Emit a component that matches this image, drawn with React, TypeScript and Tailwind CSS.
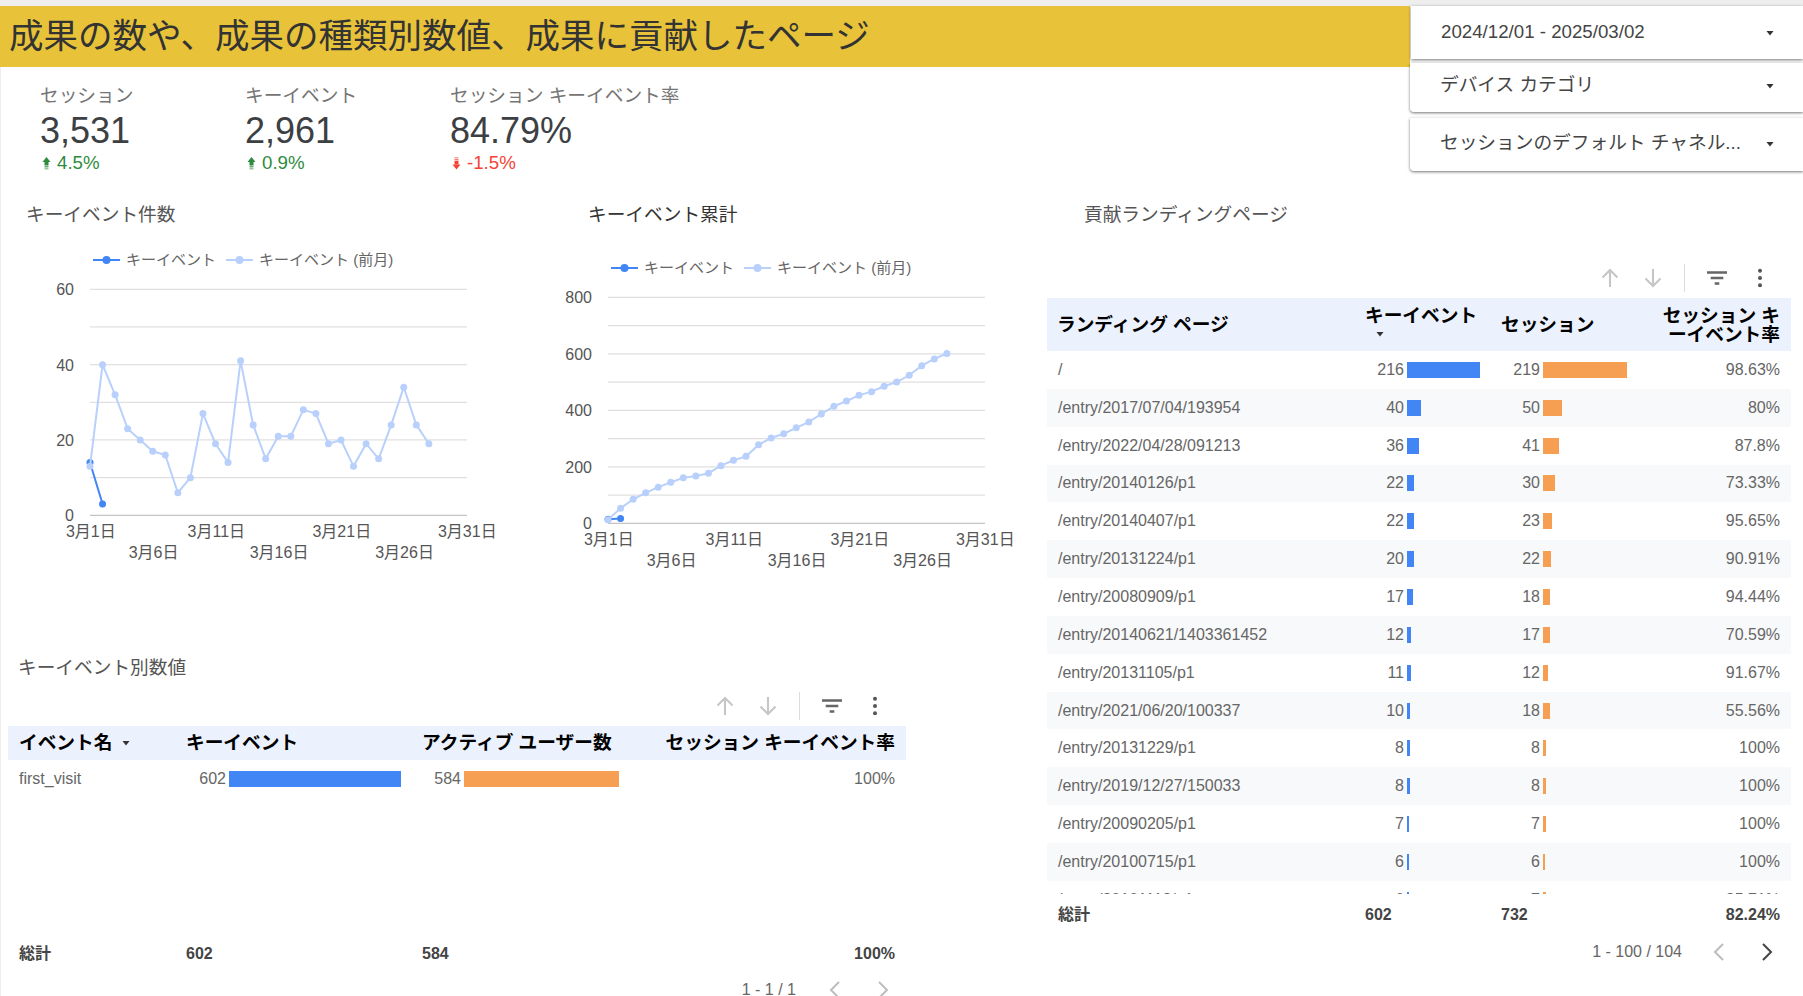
const prev = [13, 40, 32, 23, 20, 17, 16, 6, 10, 27, 19, 14, 41, 24, 15, 21, 21, 28, 27, 19, 20, 13, 19, 15, 24, 34, 24, 19];
const cumPrev = prev.reduce<number[]>((acc, v) => [...acc, (acc[acc.length - 1] ?? 0) + v], []);

const landing = [
  { page: "/", key: 216, sess: 219, rate: "98.63%" },
  { page: "/entry/2017/07/04/193954", key: 40, sess: 50, rate: "80%" },
  { page: "/entry/2022/04/28/091213", key: 36, sess: 41, rate: "87.8%" },
  { page: "/entry/20140126/p1", key: 22, sess: 30, rate: "73.33%" },
  { page: "/entry/20140407/p1", key: 22, sess: 23, rate: "95.65%" },
  { page: "/entry/20131224/p1", key: 20, sess: 22, rate: "90.91%" },
  { page: "/entry/20080909/p1", key: 17, sess: 18, rate: "94.44%" },
  { page: "/entry/20140621/1403361452", key: 12, sess: 17, rate: "70.59%" },
  { page: "/entry/20131105/p1", key: 11, sess: 12, rate: "91.67%" },
  { page: "/entry/2021/06/20/100337", key: 10, sess: 18, rate: "55.56%" },
  { page: "/entry/20131229/p1", key: 8, sess: 8, rate: "100%" },
  { page: "/entry/2019/12/27/150033", key: 8, sess: 8, rate: "100%" },
  { page: "/entry/20090205/p1", key: 7, sess: 7, rate: "100%" },
  { page: "/entry/20100715/p1", key: 6, sess: 6, rate: "100%" },
  { page: "/entry/20101118/p1", key: 6, sess: 7, rate: "85.71%" },
];

function Metric({ label, value, delta, up }: { label: string; value: string; delta: string; up: boolean }) {
  return (
    <div className="w-[205px]">
      <div className="whitespace-nowrap pt-px text-[18.7px] leading-[22px] text-[#757575]">{label}</div>
      <div className="mt-[3px] text-[36px] leading-[42px] text-[#3c4043]">{value}</div>
      <div className={`flex items-center gap-[6px] text-[18.7px] leading-[22px] ${up ? "text-[#2e8b3d]" : "text-[#f44336]"}`}>
        <svg width="9" height="14" viewBox="0 0 9 14" className="ml-[2px] fill-current">
          {up ? (
            <>
              <path d="M4.5 1 8.5 6h-8z" />
              <rect x="2.5" y="6" width="4" height="3.5" />
              <rect x="2.5" y="10" width="4" height="1.5" opacity="0.7" />
              <rect x="2.5" y="12" width="4" height="1.5" opacity="0.5" />
            </>
          ) : (
            <>
              <path d="M4.5 13.5 8.5 8.5h-8z" />
              <rect x="2.5" y="5" width="4" height="3.5" />
              <rect x="2.5" y="3" width="4" height="1.5" opacity="0.7" />
              <rect x="2.5" y="1" width="4" height="1.5" opacity="0.5" />
            </>
          )}
        </svg>
        {delta}
      </div>
    </div>
  );
}

function Caret() {
  return (
    <svg width="8" height="6" viewBox="0 0 8 6" className="fill-[#333]">
      <path d="M0.5 1h7L4 5.5z" />
    </svg>
  );
}

function FilterBox({ label, className }: { label: string; className: string }) {
  return (
    <div className={`flex items-center justify-between bg-white pl-[30px] pr-[29px] text-[18.7px] text-[#444] shadow-[0_1px_3px_rgba(0,0,0,0.55)] ${className}`}>
      <span>{label}</span>
      <Caret />
    </div>
  );
}

function LegendItem({ color, label }: { color: string; label: string }) {
  return (
    <div className="flex items-center gap-[6px]">
      <svg width="27" height="10" viewBox="0 0 27 10">
        <path d="M0 5h27" stroke={color} strokeWidth="2" />
        <circle cx="13.5" cy="5" r="4" fill={color} />
      </svg>
      <span>{label}</span>
    </div>
  );
}

function LineChart({ ticks, max, previous, current, topClass, titleClass, title }: {
  ticks: (number | null)[];
  max: number;
  previous: number[];
  current: number[];
  topClass: string;
  titleClass: string;
  title: string;
}) {
  const x = (i: number) => 90 + i * 12.55;
  const y = (v: number) => 244.3 - (v / max) * 226;
  const points = (vals: number[]) => vals.map((v, i) => `${x(i)},${y(v)}`).join(" ");
  const dates = [1, 6, 11, 16, 21, 26, 31];

  return (
    <div className="w-[518px]">
      <h2 className={`h-[30px] text-[18.7px] leading-[30px] ${titleClass}`}>{title}</h2>
      <div className={`mb-px flex h-[20px] items-center gap-[10px] pl-[93px] text-[15px] text-[#666] ${topClass}`}>
        <LegendItem color="#4285f4" label="キーイベント" />
        <LegendItem color="#b8d0fb" label="キーイベント (前月)" />
      </div>
      <svg width="518" height="300" viewBox="0 0 518 300">
        {ticks.map((t, i) => {
          const gy = 18.3 + (i * 226) / (ticks.length - 1);
          const base = i === ticks.length - 1;
          return (
            <g key={i}>
              <path d={`M90 ${gy}H467`} stroke={base ? "#c4c4c4" : "#e0e0e0"} strokeWidth="1.2" />
              {t !== null && (
                <text x="74" y={gy + 6} textAnchor="end" fontSize="16" fill="#555">{t}</text>
              )}
            </g>
          );
        })}
        {dates.map((d, i) => (
          <text key={d} x={x(d - 1) + 0.8} y={i % 2 === 0 ? 266 : 287} textAnchor="middle" fontSize="16" fill="#555">
            3月{d}日
          </text>
        ))}
        <polyline points={points(current)} fill="none" stroke="#4285f4" strokeWidth="2" />
        {current.map((v, i) => <circle key={i} cx={x(i)} cy={y(v)} r="3.5" fill="#4285f4" />)}
        <polyline points={points(previous)} fill="none" stroke="#b8d0fb" strokeWidth="2" />
        {previous.map((v, i) => <circle key={i} cx={x(i)} cy={y(v)} r="3.5" fill="#b8d0fb" />)}
      </svg>
    </div>
  );
}

function Toolbar({ className }: { className: string }) {
  return (
    <div className={`flex h-[30px] items-center justify-end ${className}`}>
      <svg width="24" height="24" viewBox="0 0 24 24" fill="none" stroke="#c6c6c6" strokeWidth="2.1">
        <path d="M12 21V4M4.5 11.5 12 4l7.5 7.5" />
      </svg>
      <svg width="24" height="24" viewBox="0 0 24 24" fill="none" stroke="#c6c6c6" strokeWidth="2.1" className="ml-[19px]">
        <path d="M12 3v17M4.5 12.5 12 20l7.5-7.5" />
      </svg>
      <div className="ml-[19px] h-[28px] w-px bg-[#dcdcdc]" />
      <svg width="24" height="24" viewBox="0 0 24 24" fill="none" stroke="#666" strokeWidth="2.4" className="ml-[20px]">
        <path d="M2 6.5h20M5.7 12h12.6M9.7 17.5h4.6" />
      </svg>
      <svg width="24" height="24" viewBox="0 0 24 24" fill="#555" className="ml-[19px]">
        <circle cx="12" cy="4.7" r="2" />
        <circle cx="12" cy="12" r="2" />
        <circle cx="12" cy="19.3" r="2" />
      </svg>
    </div>
  );
}

function Chevron({ dir, active }: { dir: "left" | "right"; active: boolean }) {
  return (
    <svg width="14" height="20" viewBox="0 0 14 20" fill="none" stroke={active ? "#444" : "#bdbdbd"} strokeWidth="2">
      <path d={dir === "left" ? "M11 2 3 10l8 8" : "M3 2l8 8-8 8"} />
    </svg>
  );
}

function Bar({ value, width, color, numClass }: { value: number; width: number; color: string; numClass: string }) {
  return (
    <div className="flex items-center">
      <span className={`text-right ${numClass}`}>{value}</span>
      <div className={`ml-[3px] h-[16px] ${color}`} style={{ width }} />
    </div>
  );
}

export default function App() {
  return (
    <div className="h-[996px] w-[1803px] overflow-hidden bg-white font-['Liberation_Sans','Noto_Sans_CJK_JP',sans-serif] text-[16px] shadow-[inset_1px_0_0_#eeeeee]">
      <div className="h-[6px] bg-[#eeeeee]" />
      <div className="flex h-[194px]">
        <div className="flex-1">
          <div className="flex h-[61px] items-center bg-[#e8c33a] pl-[9px] text-[34.5px] text-[#333]">
            成果の数や、成果の種類別数値、成果に貢献したページ
          </div>
          <div className="flex pl-[40px] pt-[17px]">
            <Metric label="セッション" value="3,531" delta="4.5%" up />
            <Metric label="キーイベント" value="2,961" delta="0.9%" up />
            <Metric label="セッション キーイベント率" value="84.79%" delta="-1.5%" up={false} />
          </div>
        </div>
        <div className="w-[393px]">
          <FilterBox label="2024/12/01 - 2025/03/02" className="ml-px h-[53px]" />
          <FilterBox label="デバイス カテゴリ" className="mt-[4px] h-[49px] rounded-bl-[4px] pb-[4px]" />
          <FilterBox label="セッションのデフォルト チャネル..." className="mt-[6px] h-[53px] rounded-bl-[4px] pb-[2px]" />
        </div>
      </div>

      <div className="flex">
        <div className="w-[1036px]">
          <div className="flex h-[453px]">
            <LineChart
              title="キーイベント件数"
              titleClass="pl-[26px] text-[#555]"
              topClass="mt-[20px]"
              ticks={[60, null, 40, null, 20, null, 0]}
              max={60}
              previous={prev}
              current={[14, 3]}
            />
            <LineChart
              title="キーイベント累計"
              titleClass="pl-[70px] text-[#333]"
              topClass="mt-[28px]"
              ticks={[800, null, 600, null, 400, null, 200, null, 0]}
              max={800}
              previous={cumPrev}
              current={[14, 17]}
            />
          </div>
          <h2 className="h-[30px] pl-[18px] text-[18.7px] leading-[30px] text-[#555]">キーイベント別数値</h2>
          <Toolbar className="mt-[8px] pr-[149px]" />
          <div className="ml-[8px] mt-[5px] w-[898px]">
            <div className="grid h-[34px] grid-cols-[168px_236px_238px_256px] items-center bg-[#ebf1fd] text-[18.7px] font-bold text-black">
              <div className="flex items-center gap-[10px] pl-[11px]">イベント名<Caret /></div>
              <div className="pl-[10px]">キーイベント</div>
              <div className="pl-[10px]">アクティブ ユーザー数</div>
              <div className="pr-[11px] text-right">セッション キーイベント率</div>
            </div>
            <div className="h-[175px] text-[#666]">
              <div className="grid h-[38px] grid-cols-[168px_236px_238px_256px] items-center">
                <div className="pl-[11px]">first_visit</div>
                <div className="pl-[10px]"><Bar value={602} width={172} color="bg-[#4285f4]" numClass="w-[40px]" /></div>
                <div className="pl-[10px]"><Bar value={584} width={155} color="bg-[#f69f53]" numClass="w-[39px]" /></div>
                <div className="pr-[11px] text-right">100%</div>
              </div>
            </div>
            <div className="grid h-[38px] grid-cols-[168px_236px_238px_256px] items-center font-bold text-[#444]">
              <div className="pl-[11px]">総計</div>
              <div className="pl-[10px]">602</div>
              <div className="pl-[10px]">584</div>
              <div className="pr-[11px] text-right">100%</div>
            </div>
            <div className="flex h-[34px] items-center justify-end gap-[34px] pr-[16px] text-[#666]">
              <span className="mr-[-2px]">1 - 1 / 1</span>
              <Chevron dir="left" active={false} />
              <Chevron dir="right" active={false} />
            </div>
          </div>
        </div>

        <div className="flex-1">
          <h2 className="h-[30px] pl-[48px] text-[18.7px] leading-[30px] text-[#555]">貢献ランディングページ</h2>
          <Toolbar className="mt-[33px] pr-[31px]" />
          <div className="ml-[11px] mt-[5px] w-[744px]">
            <div className="grid h-[53px] grid-cols-[308px_136px_149px_151px] items-center bg-[#ebf1fd] text-[18.7px] font-bold leading-[19px] text-black">
              <div className="pl-[10px]">ランディング ページ</div>
              <div className="pl-[10px]">
                <div className="whitespace-nowrap">キーイベント</div>
                <div className="flex h-[19px] items-center pl-[11px]"><Caret /></div>
              </div>
              <div className="pl-[10px]">セッション</div>
              <div className="pr-[11px] text-right">セッション キ<br />ーイベント率</div>
            </div>
            <div className="h-[543px] overflow-hidden text-[#666]">
              {landing.map((r, i) => (
                <div key={i} className={`grid h-[37.85px] grid-cols-[308px_136px_149px_151px] items-center ${i % 2 === 1 ? "bg-[#f8f9fa]" : "bg-white"}`}>
                  <div className="pl-[11px]">{r.page}</div>
                  <div className="pl-[10px]"><Bar value={r.key} width={Math.max(r.key * 0.338, 2)} color="bg-[#4285f4]" numClass="w-[39px]" /></div>
                  <div className="pl-[11px]"><Bar value={r.sess} width={Math.max(r.sess * 0.384, 2)} color="bg-[#f69f53]" numClass="w-[38px]" /></div>
                  <div className="pr-[11px] text-right">{r.rate}</div>
                </div>
              ))}
            </div>
            <div className="grid h-[42px] grid-cols-[308px_136px_149px_151px] items-center font-bold text-[#444]">
              <div className="pl-[11px]">総計</div>
              <div className="pl-[10px]">602</div>
              <div className="pl-[10px]">732</div>
              <div className="pr-[11px] text-right">82.24%</div>
            </div>
            <div className="flex h-[32px] items-center justify-end pr-[17px] text-[#666]">
              <span>1 - 100 / 104</span>
              <span className="ml-[30px]"><Chevron dir="left" active={false} /></span>
              <span className="ml-[34px]"><Chevron dir="right" active /></span>
            </div>
          </div>
        </div>
      </div>
    </div>
  );
}
